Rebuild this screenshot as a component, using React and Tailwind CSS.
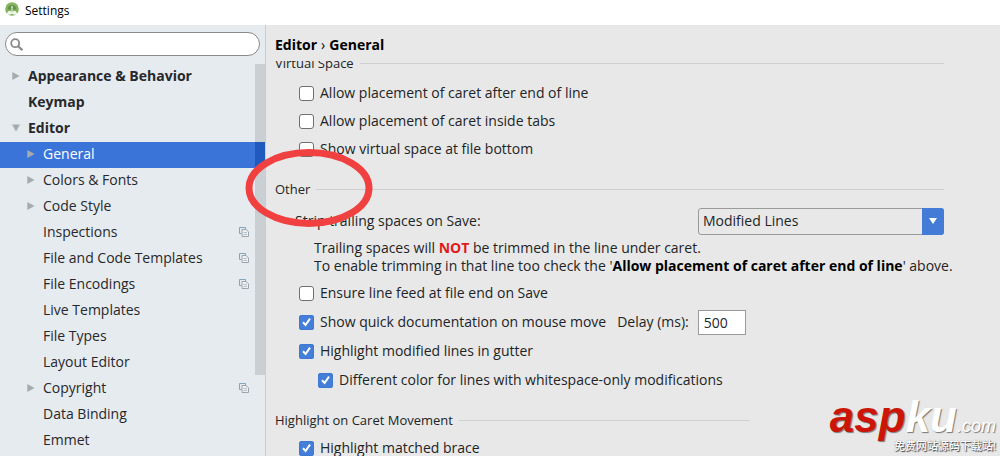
import React from "react";

const TREE = [
  { label: "Appearance & Behavior", level: 0, arrow: "closed" },
  { label: "Keymap", level: 0 },
  { label: "Editor", level: 0, arrow: "open" },
  { label: "General", level: 1, arrow: "closed", selected: true },
  { label: "Colors & Fonts", level: 1, arrow: "closed" },
  { label: "Code Style", level: 1, arrow: "closed" },
  { label: "Inspections", level: 1, shared: true },
  { label: "File and Code Templates", level: 1, shared: true },
  { label: "File Encodings", level: 1, shared: true },
  { label: "Live Templates", level: 1 },
  { label: "File Types", level: 1 },
  { label: "Layout Editor", level: 1 },
  { label: "Copyright", level: 1, arrow: "closed", shared: true },
  { label: "Data Binding", level: 1 },
  { label: "Emmet", level: 1 },
];

function Arrow({ kind }) {
  return (
    <svg viewBox="0 0 8 8" className="size-2 shrink-0" fill="#a6abae" aria-hidden="true">
      {kind === "closed" && <path d="M0.3 0 L7.6 4 L0.3 8 Z" />}
      {kind === "open" && <path d="M0 0.6 H8 L4 7.4 Z" />}
    </svg>
  );
}

function SharedIcon() {
  return (
    <svg viewBox="0 0 10 10" className="size-2.5 shrink-0" fill="none" stroke="#8ba4b5" aria-hidden="true">
      <path d="M2.5 6.5 H0.5 V0.5 H6.5 V2" />
      <path d="M3 2.5 H7 L9.5 4.8 V9.5 H3 Z" fill="#eef1f3" stroke="#9aa5ad" />
      <path d="M4.5 5.5 H8 M4.5 7.5 H8" stroke="#b3bec6" />
    </svg>
  );
}

function TreeRow({ item }) {
  return (
    <li>
      <button
        type="button"
        className={`flex h-[26px] w-full items-center gap-2 pr-4 pb-0.5 text-left ${
          item.level === 0 ? "pl-3 font-bold" : "pl-[27px]"
        } ${item.selected ? "bg-[#3b74d8] text-white" : "text-[#26282b]"}`}
      >
        <Arrow kind={item.arrow} />
        <span className="flex-1 truncate">{item.label}</span>
        {item.shared && <SharedIcon />}
      </button>
    </li>
  );
}

function Check({ id, label, checked = false, nested = false, children }) {
  return (
    <div className={`flex h-7 items-center ${nested ? "pl-[43px]" : "pl-6"}`}>
      <span className="relative flex size-[15px] shrink-0">
        <input
          id={id}
          type="checkbox"
          defaultChecked={checked}
          className="peer size-[15px] appearance-none rounded-[3px] border border-[#707070] bg-white checked:rounded-xs checked:border-[#3f78d0] checked:bg-[#437ed8]"
        />
        <svg
          viewBox="0 0 15 15"
          className="pointer-events-none absolute inset-0 hidden size-[15px] peer-checked:block"
          fill="none"
          stroke="white"
          strokeWidth="2"
          aria-hidden="true"
        >
          <path d="M4 7.2 L6.6 10 L11 3.6" />
        </svg>
      </span>
      <label htmlFor={id} className="pl-1.5 whitespace-nowrap">
        {label}
      </label>
      {children}
    </div>
  );
}

function SectionTitle({ children, short = false }) {
  return (
    <div className={`flex h-7 items-center gap-1.5 ${short ? "mr-[194px]" : ""}`}>
      <h2 className="text-[13px] whitespace-nowrap">{children}</h2>
      <span className="h-px flex-1 bg-[#cfcfcf]" />
    </div>
  );
}

function Logo() {
  return (
    <svg viewBox="0 0 14 14" className="size-3.5" aria-hidden="true">
      <circle cx="7" cy="7" r="6.8" fill="#86b562" />
      <path d="M2.6 7.6 A4.4 4.6 0 0 1 11.4 7.6 Z" fill="#5f9148" />
      <path d="M7 5 V10" stroke="#cfe3c4" strokeWidth="1.2" />
      <circle cx="7" cy="5" r="1" fill="#cfe3c4" />
      <path d="M1.8 11.6 L3.6 9 H5.6 L7 10.2 L8.4 9 H10.4 L12.2 11.6 L10.2 13 L7 11.8 L3.8 13 Z" fill="#eef6ea" />
    </svg>
  );
}

export default function App() {
  return (
    <div className="relative flex h-screen flex-col overflow-hidden bg-[#e8e8e8] font-['Open_Sans','Noto_Sans',sans-serif] text-sm text-[#222426]">
      <header className="flex h-[25px] shrink-0 items-start gap-1.5 bg-white pt-0.5 pl-[5px]">
        <Logo />
        <h1 className="text-xs leading-[18px] text-black">Settings</h1>
      </header>

      <div className="flex min-h-0 flex-1">
        <aside className="flex w-[266px] shrink-0 flex-col border-r border-[#c9ced2] bg-[#e6ebf0]">
          <div className="px-[5px] pt-[7px] pb-2">
            <label className="flex h-6 items-center gap-1 rounded-full border border-[#8a8a8a] bg-white pl-1">
              <svg viewBox="0 0 13 13" className="size-[13px]" fill="none" stroke="#8a8a8a" strokeWidth="1.8" aria-hidden="true">
                <circle cx="5.2" cy="5.2" r="4" />
                <path d="M8.2 8.2 L12.3 12.2" strokeWidth="2.2" />
              </svg>
              <input type="search" aria-label="Search settings" className="min-w-0 flex-1 bg-transparent pr-3 outline-none" />
            </label>
          </div>
          <nav className="relative min-h-0 flex-1 overflow-hidden">
            <ul>
              {TREE.map((item) => (
                <TreeRow key={item.label} item={item} />
              ))}
            </ul>
            <span className="absolute top-0 right-0 h-[311px] w-2.5 bg-[#c9cfd3]" />
            <span className="absolute top-[78px] right-0 h-[26px] w-2.5 bg-[#1f5abf]" />
          </nav>
        </aside>

        <main className="flex min-w-0 flex-1 flex-col pr-14 pl-[9px]">
          <div className="flex h-9 shrink-0 items-center gap-1 pt-1 font-bold text-black">
            <span>Editor</span>
            <span className="font-normal">›</span>
            <span>General</span>
          </div>
          <div className="-mr-14 min-h-0 flex-1 overflow-hidden pr-14">
            <div className="-mt-3">
              <SectionTitle>Virtual Space</SectionTitle>
              <div className="mt-0.5">
                <Check id="caret-eol" label="Allow placement of caret after end of line" />
                <Check id="caret-tabs" label="Allow placement of caret inside tabs" />
                <Check id="virtual-bottom" label="Show virtual space at file bottom" />
              </div>
            </div>

            <div className="mt-3">
              <SectionTitle>Other</SectionTitle>
              <div className="mt-1 flex h-7 items-center justify-between pl-5">
                <label htmlFor="strip">Strip trailing spaces on Save:</label>
                <span className="relative flex w-[246px]">
                  <select
                    id="strip"
                    className="h-[27px] w-full appearance-none rounded-[3px] border border-[#9a9a9a] bg-[#e8e8e8] pl-1 outline-none"
                  >
                    <option>Modified Lines</option>
                    <option>All</option>
                    <option>None</option>
                  </select>
                  <span className="pointer-events-none absolute inset-y-0 right-0 flex w-[22px] items-center justify-center rounded-r-[3px] bg-[#437bd6]">
                    <svg viewBox="0 0 8 6" className="h-1.5 w-2" fill="white" aria-hidden="true">
                      <path d="M0 0 H8 L4 6 Z" />
                    </svg>
                  </span>
                </span>
              </div>
              <p className="mt-1 pl-[39px] leading-[18px] whitespace-nowrap">
                Trailing spaces will <b className="text-[#e01b1b]">NOT</b> be trimmed in the line under caret.
                <br />
                To enable trimming in that line too check the '
                <b className="text-black">Allow placement of caret after end of line</b>' above.
              </p>
              <div className="mt-1 flex flex-col gap-px">
                <Check id="line-feed" label="Ensure line feed at file end on Save" />
                <Check id="quick-doc" label="Show quick documentation on mouse move" checked>
                  <label htmlFor="delay" className="pl-[11px] whitespace-nowrap">
                    Delay (ms):
                  </label>
                  <input
                    id="delay"
                    type="text"
                    defaultValue="500"
                    className="ml-[9px] h-[25px] w-12 border border-[#9a9a9a] bg-white pl-[5px] outline-none"
                  />
                </Check>
                <Check id="gutter" label="Highlight modified lines in gutter" checked />
                <Check id="whitespace" label="Different color for lines with whitespace-only modifications" checked nested />
              </div>
            </div>

            <div className="mt-3">
              <SectionTitle short>Highlight on Caret Movement</SectionTitle>
              <Check id="brace" label="Highlight matched brace" checked />
            </div>
          </div>
        </main>
      </div>

      <svg viewBox="0 0 128 80" className="pointer-events-none absolute top-[148px] left-[245px] h-20 w-32" fill="none" aria-hidden="true">
        <ellipse cx="64" cy="40" rx="60" ry="35.5" stroke="#f04040" strokeWidth="7" />
      </svg>

      <div className="pointer-events-none absolute right-1 bottom-1 flex flex-col items-end font-['Liberation_Sans','Noto_Sans_CJK_SC',sans-serif] text-white">
        <p className="flex items-baseline leading-[40px] italic [text-shadow:1px_1px_1px_#777]">
          <span className="text-[44px] font-bold text-[#cc1507]">asp</span>
          <span className="text-[44px] font-bold">ku</span>
          <span className="text-lg">.com</span>
        </p>
        <p className="text-[11px] leading-3 font-medium [text-shadow:1px_1px_1px_#444,0_0_1px_#777]">免费网站源码下载站!</p>
      </div>
    </div>
  );
}
